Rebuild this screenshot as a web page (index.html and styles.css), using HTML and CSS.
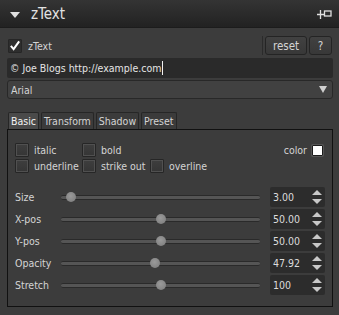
FILE: index.html
```html
<!DOCTYPE html>
<html lang="en">
<head>
    <meta charset="UTF-8">
    <link rel="stylesheet" href="styles.css">
    <title>zText</title>
</head>
<body>
    <div class="header">
        <span class="collapse"></span>
        <span class="title">zText</span>
        <svg class="pin" width="15" height="10" viewBox="0 0 15 10">
            <path d="M0 5.5h7M3.5 1v9" stroke="#e0e0e0" stroke-width="1.3" fill="none"/>
            <rect x="7.5" y="2" width="6.5" height="5" stroke="#e0e0e0" stroke-width="1.3" fill="none"/>
        </svg>
    </div>

    <div class="content">
        <div class="top-row">
            <label class="check big">
                <span class="box on">
                    <svg width="13" height="13" viewBox="0 0 13 13"><path d="M2 7l3 3.5L11 2" stroke="#fff" stroke-width="2.2" fill="none"/></svg>
                </span>
                zText
            </label>
            <span class="sep"></span>
            <button class="btn reset">reset</button>
            <button class="btn help">?</button>
        </div>

        <div class="text-field">© Joe Blogs http://example.com<span class="caret"></span></div>

        <div class="combo">
            <span>Arial</span>
            <span class="combo-arrow"></span>
        </div>

        <div class="tabs">
            <div class="tab active">Basic</div>
            <div class="tab">Transform</div>
            <div class="tab">Shadow</div>
            <div class="tab">Preset</div>
        </div>

        <div class="panel">
            <div class="styles">
                <div class="checks">
                    <label class="check"><span class="box"></span>italic</label>
                    <label class="check"><span class="box"></span>bold</label>
                    <span></span>
                    <label class="check"><span class="box"></span>underline</label>
                    <label class="check"><span class="box"></span>strike out</label>
                    <label class="check"><span class="box"></span>overline</label>
                </div>
                <div class="color">color <span class="swatch"></span></div>
            </div>

            <div class="sliders">
                <div class="slider-row">
                    <span class="slider-label">Size</span>
                    <div class="track"><span class="handle" style="left: 10px"></span></div>
                    <div class="spin"><span>3.00</span><span class="arrows"></span></div>
                </div>
                <div class="slider-row">
                    <span class="slider-label">X-pos</span>
                    <div class="track"><span class="handle" style="left: 100px"></span></div>
                    <div class="spin"><span>50.00</span><span class="arrows"></span></div>
                </div>
                <div class="slider-row">
                    <span class="slider-label">Y-pos</span>
                    <div class="track"><span class="handle" style="left: 100px"></span></div>
                    <div class="spin"><span>50.00</span><span class="arrows"></span></div>
                </div>
                <div class="slider-row">
                    <span class="slider-label">Opacity</span>
                    <div class="track"><span class="handle" style="left: 94px"></span></div>
                    <div class="spin"><span>47.92</span><span class="arrows"></span></div>
                </div>
                <div class="slider-row">
                    <span class="slider-label">Stretch</span>
                    <div class="track"><span class="handle" style="left: 100px"></span></div>
                    <div class="spin"><span>100</span><span class="arrows"></span></div>
                </div>
            </div>
        </div>
    </div>
</body>
</html>
```

FILE: styles.css
```css
body {
    margin: 0;
    background-color: #3c3c3c;
    color: #d4d4d4;
    font-family: "DejaVu Sans Condensed", "Liberation Sans", sans-serif;
    font-size: 10.5px;
    height: 315px;
    overflow: hidden;
}

.header {
    height: 28px;
    display: flex;
    align-items: center;
    background: linear-gradient(#343434, #222);
    border-bottom: 1px solid #1c1c1c;
    box-sizing: border-box;
}

.collapse {
    width: 0;
    height: 0;
    margin-left: 10px;
    margin-top: 2px;
    border-left: 5px solid transparent;
    border-right: 5px solid transparent;
    border-top: 6px solid #e0e0e0;
}

.title {
    margin-left: 11px;
    font-size: 15px;
    color: #e2e2e2;
}

.pin {
    margin-left: auto;
    margin-right: 7px;
    margin-top: 1px;
}

.content {
    padding: 0 7px;
}

.top-row {
    display: flex;
    align-items: center;
    height: 19px;
    margin-top: 8px;
}

.check {
    display: flex;
    align-items: center;
    gap: 5px;
    height: 16px;
}

.check.big {
    margin-left: 1px;
    gap: 6px;
}

.box {
    width: 12px;
    height: 12px;
    border: 1px solid #262626;
    border-radius: 1px;
    background: linear-gradient(#3e3e3e, #353535);
    box-shadow: inset 0 0 0 1px #505050;
    display: flex;
    align-items: center;
    justify-content: center;
}

.box.on {
    background: #2e2e2e;
    box-shadow: none;
}

.sep {
    margin-left: auto;
    width: 1px;
    height: 19px;
    background-color: #2b2b2b;
    margin-right: 2px;
}

.btn {
    height: 19px;
    padding: 0;
    border: 1px solid #242424;
    border-radius: 3px;
    background: linear-gradient(#414141, #383838);
    color: #d4d4d4;
    font-family: inherit;
    font-size: 11.5px;
}

.reset {
    width: 42px;
}

.help {
    width: 23px;
    margin-left: 2px;
}

.text-field {
    margin-top: 3px;
    height: 20px;
    line-height: 20px;
    padding-left: 3px;
    background-color: #2a2a2a;
    border-radius: 2px;
    color: #e4e4e4;
    margin-right: -1px;
}

.caret {
    display: inline-block;
    width: 1px;
    height: 14px;
    background-color: #f0f0f0;
    vertical-align: -3px;
    margin-left: 1px;
}

.combo {
    margin-top: 2px;
    height: 19px;
    box-sizing: border-box;
    border: 1px solid #282828;
    border-radius: 3px;
    background-color: #414141;
    display: flex;
    align-items: center;
    padding-left: 3px;
    margin-right: -1px;
}

.combo-arrow {
    margin-left: auto;
    margin-right: 5px;
    width: 0;
    height: 0;
    border-left: 4px solid transparent;
    border-right: 4px solid transparent;
    border-top: 7px solid #cfcfcf;
}

.tabs {
    display: flex;
    gap: 2px;
    margin-top: 13px;
    padding-left: 1px;
}

.tab {
    height: 16px;
    line-height: 16px;
    padding: 0 2px;
    border: 1px solid #262626;
    border-bottom: none;
    border-radius: 2px 2px 0 0;
    background-color: #3b3b3b;
}

.tab.active {
    background-color: #4a4a4a;
    color: #f2f2f2;
}

.panel {
    height: 164px;
    border: 1px solid #111;
    margin-right: -1px;
    padding: 12px 7px 0 7px;
}

.styles {
    display: flex;
    justify-content: space-between;
}

.checks {
    display: grid;
    grid-template-columns: 67px 68px auto;
    row-gap: 0;
}

.color {
    display: flex;
    align-items: center;
    gap: 5px;
    height: 16px;
    margin-right: 2px;
}

.swatch {
    width: 9px;
    height: 9px;
    background-color: #fff;
    border: 1px solid #1c1c1c;
    box-shadow: 0 0 0 1px #555;
    border-radius: 1px;
}

.sliders {
    margin-top: 13px;
    display: flex;
    flex-direction: column;
    gap: 2px;
}

.slider-row {
    display: flex;
    align-items: center;
    height: 20px;
}

.slider-label {
    width: 46px;
}

.track {
    position: relative;
    width: 199px;
    height: 3px;
    background-color: #555;
    border-top: 1px solid #2a2a2a;
    border-bottom: 1px solid #2a2a2a;
    border-radius: 2px;
}

.handle {
    position: absolute;
    top: -4px;
    width: 10px;
    height: 10px;
    margin-left: -5px;
    border-radius: 50%;
    background: radial-gradient(circle at 45% 40%, #9a9a9a, #7a7a7a);
}

.spin {
    margin-left: auto;
    width: 55px;
    height: 20px;
    box-sizing: border-box;
    padding-left: 3px;
    background-color: #2c2c2c;
    border-radius: 2px;
    display: flex;
    align-items: center;
    justify-content: space-between;
    color: #dcdcdc;
}

.arrows {
    position: relative;
    width: 10px;
    height: 14px;
    margin-right: 3px;
}

.arrows::before,
.arrows::after {
    content: "";
    position: absolute;
    left: 0;
    border-left: 5px solid transparent;
    border-right: 5px solid transparent;
}

.arrows::before {
    top: 0;
    border-bottom: 5px solid #c8c8c8;
}

.arrows::after {
    bottom: 0;
    border-top: 5px solid #c8c8c8;
}
```
